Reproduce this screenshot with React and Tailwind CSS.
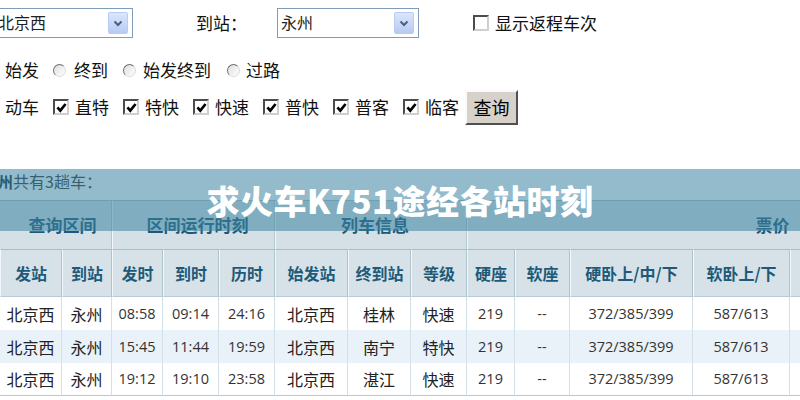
import React from "react";

const cjk = "font-['Noto_Sans_CJK_SC',sans-serif]";
const num = "font-['Open_Sans','Noto_Sans_CJK_SC',sans-serif]";

const cols = [62, 50, 51, 56, 56, 73, 63, 56, 48, 55, 123, 97, 150, 189];

const heads = ["发站", "到站", "发时", "到时", "历时", "始发站", "终到站", "等级", "硬座", "软座", "硬卧上/中/下", "软卧上/下", "高级软卧上/下", "备注"];

const groups = [
  { label: "查询区间", span: 2, pad: "pl-[14px]" },
  { label: "区间运行时刻", span: 3, pad: "pl-[8px]" },
  { label: "列车信息", span: 3, pad: "pl-[8px]" },
  { label: "票价（元）", span: 6, pad: "" },
];

const trains = [
  ["北京西", "永州", "08:58", "09:14", "24:16", "北京西", "桂林", "快速", "219", "--", "372/385/399", "587/613", "--", ""],
  ["北京西", "永州", "15:45", "11:44", "19:59", "北京西", "南宁", "特快", "219", "--", "372/385/399", "587/613", "--", ""],
  ["北京西", "永州", "19:12", "19:10", "23:58", "北京西", "湛江", "快速", "219", "--", "372/385/399", "587/613", "--", ""],
];

const numericCols = new Set([2, 3, 4, 8, 9, 10, 11, 12]);

function Select({ value, className }) {
  return (
    <div className={`flex items-center h-[30px] border border-[#7f9db9] bg-white pl-[3px] pr-[4px] ${className}`}>
      <span className="flex-1 text-[16px] leading-none text-[#222] -mt-[3px]">{value}</span>
      <span className="w-[20px] h-[22px] rounded-[2px] border border-[#b8cbf2] bg-gradient-to-b from-[#dce6fb] to-[#b7cbf3] flex items-center justify-center">
        <svg width="12" height="12" viewBox="0 0 12 12">
          <path d="M2.5 4.5 L6 8 L9.5 4.5" fill="none" stroke="#4a5f86" strokeWidth="2" />
        </svg>
      </span>
    </div>
  );
}

function Check({ checked, className = "" }) {
  return (
    <span className={`shrink-0 w-[16px] h-[16px] border-2 border-[#4c4c4c] border-b-[#cfcfcf] border-r-[#cfcfcf] bg-white flex items-center justify-center ${className}`}>
      {checked && (
        <svg width="11" height="11" viewBox="0 0 10 10">
          <path d="M1.3 4.8 L3.9 7.8 L8.7 1.8" fill="none" stroke="#000" strokeWidth="2.4" />
        </svg>
      )}
    </span>
  );
}

function Radio({ className = "" }) {
  return (
    <span className={`shrink-0 w-[13px] h-[13px] rounded-full border-[1.5px] border-[#6f6f6f] border-b-[#dcdcdc] border-r-[#dcdcdc] bg-gradient-to-br from-[#dedede] to-white ${className}`} />
  );
}

export default function App() {
  const kinds = ["直特", "特快", "快速", "普快", "普客", "临客"];

  return (
    <div className={`w-[800px] h-[400px] overflow-hidden bg-white ${cjk}`}>
      {/* search form */}
      <div className="h-[169px] pt-[8px] text-[17px] text-[#111]">
        <div className="flex items-center h-[30px]">
          <Select value="北京西" className="ml-[-6px] w-[139px]" />
          <span className="ml-[63px]">到站：</span>
          <Select value="永州" className="ml-[30px] w-[142px]" />
          <Check className="ml-[54px]" />
          <span className="ml-[6px]">显示返程车次</span>
        </div>

        <div className="flex items-center h-[24px] mt-[20px]">
          <span className="ml-[5px]">始发</span>
          <Radio className="ml-[14px]" />
          <span className="ml-[8px]">终到</span>
          <Radio className="ml-[15px]" />
          <span className="ml-[7px]">始发终到</span>
          <Radio className="ml-[16px]" />
          <span className="ml-[6px]">过路</span>
        </div>

        <div className="flex items-center h-[36px] mt-[7px]">
          <span className="ml-[5px]">动车</span>
          {kinds.map((k) => (
            <React.Fragment key={k}>
              <Check checked className="ml-[14px]" />
              <span className="ml-[6px]">{k}</span>
            </React.Fragment>
          ))}
          <button className="ml-[6px] w-[53px] h-[35px] bg-[#d6d2ca] border-2 border-[#fafafa] border-b-[#505050] border-r-[#505050] text-[18px] text-black">
            查询
          </button>
        </div>
      </div>

      {/* results */}
      <div className="relative">
        <div className="h-[31px] flex items-center pb-[8px] text-[16px] text-[#333]">
          <span className="ml-[-3px] font-bold text-[#0f2f40]">州</span>
          <span>共有3趟车：</span>
        </div>

        <table className="table-fixed border-separate border-spacing-0 w-[1129px]">
          <colgroup>
            {cols.map((w, i) => (
              <col key={i} style={{ width: w }} />
            ))}
          </colgroup>
          <thead>
            <tr className="h-[49px]">
              {groups.map((g, i) => (
                <th
                  key={g.label}
                  colSpan={g.span}
                  className={`bg-[#d4e0e6] border-t border-[#a9c0cb] ${i > 0 ? "border-l border-l-[#f4f8fa]" : ""} border-r border-r-[#b3c7d1] text-[17px] font-bold text-[#1d5878] ${g.pad}`}
                >
                  {g.label}
                </th>
              ))}
            </tr>
            <tr className="h-[48px]">
              {heads.map((h) => (
                <th
                  key={h}
                  className="bg-[#d6e2e8] border-t border-t-[#a9bcc6] border-l border-l-[#f3f7f9] border-r border-r-[#b0c3cd] border-b border-b-[#b8cad3] text-[16px] font-bold text-[#1e5a78] whitespace-nowrap"
                >
                  {h}
                </th>
              ))}
            </tr>
          </thead>
          <tbody>
            {trains.map((row, r) => (
              <tr key={r} className={`h-[33px] ${r === 1 ? "bg-[#e9f2f8]" : "bg-white"}`}>
                {row.map((cell, c) => (
                  <td
                    key={c}
                    className={`text-center border-r border-r-[#d3e0e7] ${r === trains.length - 1 ? "border-b border-b-[#b9c9d1]" : ""} ${
                      numericCols.has(c) ? `${num} text-[14.5px] text-[#333]` : "text-[16px] text-[#222]"
                    }`}
                  >
                    {cell}
                  </td>
                ))}
              </tr>
            ))}
          </tbody>
        </table>

        {/* title band */}
        <div className="absolute left-0 right-0 top-0 h-[62px] bg-[rgba(59,132,161,0.55)] flex items-center justify-center">
          <span className="text-white text-[33px] font-black tracking-[0.5px] leading-none">
            求火车K751途经各站时刻
          </span>
        </div>
      </div>
    </div>
  );
}
